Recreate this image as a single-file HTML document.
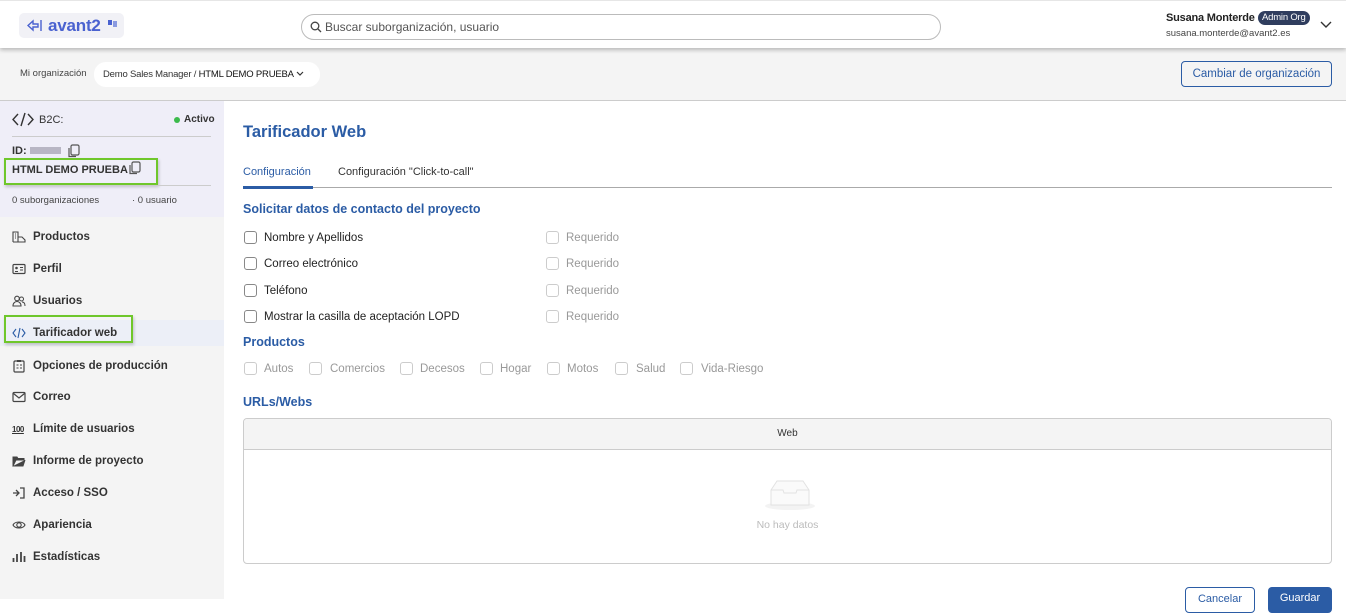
<!DOCTYPE html>
<html><head><meta charset="utf-8"><style>
*{box-sizing:border-box;margin:0;padding:0}
body{width:1346px;height:599px;overflow:hidden;font-family:"Liberation Sans",sans-serif;background:#fff;position:relative;color:#222}
.abs{position:absolute}
.hdr{left:0;top:0;width:1346px;height:48px;background:#fff;border-top:1px solid #e6e6e6;box-shadow:0 2px 4px rgba(0,0,0,.25);z-index:2}
.logo{left:19px;top:12px;width:105px;height:25px;background:#f1f1f6;border-radius:5px}
.logo span{position:absolute;left:29px;top:3px;font-size:17px;font-weight:bold;color:#4a62d0;letter-spacing:-.2px}
.search{left:301px;top:13px;width:640px;height:26px;border:1px solid #bbb;border-radius:13px;font-size:12px;color:#555;padding:5px 0 0 23px}
.org{left:0;top:48px;width:1346px;height:53px;background:#f4f4f4;border-bottom:1px solid #ccc}
.side{left:0;top:101px;width:224px;height:498px;background:#f4f4f4}
.lav{left:0;top:101px;width:224px;height:116px;background:#efeef8}
.menu div{position:absolute;left:12px;font-size:11.5px;font-weight:bold;color:#333;display:flex;align-items:center;gap:7px;white-space:nowrap}
.menu svg{flex:none}
.blue{color:#2b5ca5}
.cb{position:absolute;width:13px;height:13px;border:1px solid #888;border-radius:3px;background:#fff}
.cbd{border-color:#ccc}
.t{position:absolute;font-size:11.5px}
.g{color:#999}
</style></head><body>
<div class="abs hdr">
 <div class="abs logo"><svg class="abs" style="left:8px;top:6px" width="16" height="13"><path d="M1 6.5L6 2v3h5v3H6v3z" fill="none" stroke="#4a62d0" stroke-width="1.4"/><path d="M14 1v11" stroke="#4a62d0" stroke-width="1.4"/></svg><span>avant2</span><div class="abs" style="left:89px;top:7px;width:4px;height:5px;background:#4a62d0"></div><div class="abs" style="left:94px;top:8px;width:4px;height:6px;background:#8a9ae0"></div></div>
 <div class="abs search"><svg class="abs" style="left:8px;top:6px" width="12" height="12"><circle cx="5" cy="5" r="3.8" fill="none" stroke="#444" stroke-width="1.3"/><path d="M8 8l3 3" stroke="#444" stroke-width="1.3"/></svg>Buscar suborganización, usuario</div>
 <div class="abs" style="left:1166px;top:11px;font-size:11px;font-weight:bold;color:#222;letter-spacing:-.2px">Susana Monterde</div>
 <div class="abs" style="left:1258px;top:10px;height:14px;padding:0 4px;background:#2f3d5e;color:#fff;font-size:9.5px;border-radius:7px;line-height:14px;letter-spacing:-.2px">Admin Org</div>
 <div class="abs" style="left:1166px;top:27px;font-size:9.5px;color:#444">susana.monterde@avant2.es</div>
 <svg class="abs" style="left:1320px;top:20px" width="12" height="8"><path d="M1 1l5 5 5-5" fill="none" stroke="#333" stroke-width="1.4"/></svg>
</div>
<div class="abs org">
 <div class="abs" style="left:20px;top:20px;font-size:9.5px;color:#444">Mi organización</div>
 <div class="abs" style="left:94px;top:14px;width:226px;height:25px;background:#fff;border-radius:12px;font-size:9.5px;padding:7px 0 0 9px;color:#333;white-space:nowrap;letter-spacing:-.2px">Demo Sales Manager / <span style="color:#111">HTML DEMO PRUEBA</span> <svg width="8" height="6"><path d="M1 1l3 3 3-3" fill="none" stroke="#333" stroke-width="1.2"/></svg></div>
 <div class="abs" style="left:1181px;top:13px;width:151px;height:26px;border:1px solid #2b5ca5;border-radius:4px;color:#2b5ca5;font-size:11.5px;text-align:center;line-height:24px">Cambiar de organización</div>
</div>
<div class="abs side"></div>
<div class="abs lav">
 <svg class="abs" style="left:12px;top:11px" width="22" height="15"><path d="M6 2L1 7.5 6 13M16 2l5 5.5L16 13M13 1L9 14" fill="none" stroke="#333" stroke-width="1.4"/></svg>
 <div class="abs" style="left:39px;top:13px;font-size:11px;color:#333">B2C:</div>
 <div class="abs" style="left:174px;top:16px;width:6px;height:6px;border-radius:3px;background:#3cba4c"></div>
 <div class="abs" style="left:184px;top:13px;font-size:10px;font-weight:bold;color:#333">Activo</div>
 <div class="abs" style="left:12px;top:35px;width:199px;border-top:1px solid #ccc"></div>
 <div class="abs" style="left:12px;top:44px;font-size:11px;font-weight:bold;color:#333">ID:</div>
 <div class="abs" style="left:30px;top:46px;width:31px;height:7px;background:#b8b6c4"></div>
 <svg class="abs" style="left:67px;top:43px" width="13" height="14"><rect x="4" y="1" width="8" height="10" rx="1.5" fill="none" stroke="#555" stroke-width="1.2"/><path d="M2 4v8.5h7" fill="none" stroke="#555" stroke-width="1.2"/></svg>
 <div class="abs" style="left:4px;top:57px;width:154px;height:27px;border:2px solid #6fc72b;box-shadow:1px 2px 3px rgba(0,0,0,.2)"></div>
 <div class="abs" style="left:12px;top:63px;font-size:11px;font-weight:bold;color:#333">HTML DEMO PRUEBA</div>
 <svg class="abs" style="left:128px;top:60px" width="13" height="14"><rect x="4" y="1" width="8" height="10" rx="1.5" fill="none" stroke="#555" stroke-width="1.2"/><path d="M2 4v8.5h7" fill="none" stroke="#555" stroke-width="1.2"/></svg>
 <div class="abs" style="left:12px;top:72px;width:0"></div>
 <div class="abs" style="left:12px;top:84px;width:199px;border-top:1px solid #ccc"></div>
 <div class="abs" style="left:12px;top:94px;font-size:9.5px;color:#444">0 suborganizaciones</div>
 <div class="abs" style="left:132px;top:94px;font-size:9.5px;color:#444">· 0 usuario</div>
</div>
<div class="abs" style="left:0;top:320px;width:224px;height:26px;background:#eceff7"></div>
<div class="abs" style="left:4px;top:315px;width:129px;height:28px;border:2px solid #6fc72b;box-shadow:1px 2px 3px rgba(0,0,0,.2)"></div>
<div class="menu">
 <div style="top:231px"><svg width="14" height="12"><path d="M1 11V1h5v10M3 3h1M3 5h1M3 7h1M6 6h4l3 3v2H1" fill="none" stroke="#444" stroke-width="1.1"/></svg>Productos</div>
 <div style="top:263px"><svg width="14" height="12"><rect x="1" y="1.5" width="12" height="9" rx="1" fill="none" stroke="#444" stroke-width="1.2"/><circle cx="4.5" cy="5" r="1.3" fill="#444"/><path d="M3 8.5h3M8 4.5h3M8 7h3" stroke="#444"/></svg>Perfil</div>
 <div style="top:295px"><svg width="14" height="12"><circle cx="5" cy="3.5" r="2.3" fill="none" stroke="#444" stroke-width="1.1"/><path d="M1 11c0-3 2-4.5 4-4.5s4 1.5 4 4.5z" fill="none" stroke="#444" stroke-width="1.1"/><circle cx="9.5" cy="4" r="2" fill="none" stroke="#444"/><path d="M10 7c2 0 3 1.5 3 4" fill="none" stroke="#444"/></svg>Usuarios</div>
 <div class="blue" style="top:327px"><svg width="14" height="12"><path d="M4 2L1 6l3 4M10 2l3 4-3 4M8 1L6 11" fill="none" stroke="#2b5ca5" stroke-width="1.1"/></svg>Tarificador web</div>
 <div style="top:359px"><svg width="14" height="14"><rect x="2" y="2" width="10" height="11" rx="1" fill="none" stroke="#444" stroke-width="1.2"/><rect x="5" y="1" width="4" height="2" fill="#444"/><path d="M4.5 6h2M4.5 9h2M8 6h2M8 9h2" stroke="#444"/></svg>Opciones de producción</div>
 <div style="top:391px"><svg width="14" height="12"><rect x="1" y="1.5" width="12" height="9" rx="1" fill="none" stroke="#444" stroke-width="1.2"/><path d="M1.5 2.5L7 7l5.5-4.5" fill="none" stroke="#444" stroke-width="1.2"/></svg>Correo</div>
 <div style="top:423px"><span style="width:14px;font-size:8px;font-weight:bold;text-decoration:underline;letter-spacing:-.5px">100</span>Límite de usuarios</div>
 <div style="top:455px"><svg width="14" height="12"><path d="M1 11V2h4l1 1.5h6V5H4L1 11h10l2-6" fill="#444" stroke="#444" stroke-width="1"/></svg>Informe de proyecto</div>
 <div style="top:487px"><svg width="14" height="12"><path d="M1 6h5M4 3l3 3-3 3M8 1h4v10H8" fill="none" stroke="#444" stroke-width="1.3"/></svg>Acceso / SSO</div>
 <div style="top:519px"><svg width="14" height="12"><path d="M1 6c2-4 10-4 12 0-2 4-10 4-12 0z" fill="none" stroke="#444" stroke-width="1.1"/><circle cx="7" cy="6" r="2.2" fill="none" stroke="#444" stroke-width="1.1"/></svg>Apariencia</div>
 <div style="top:551px"><svg width="14" height="12"><path d="M1.5 11V7M5 11V3M9 11V1M12.5 11V5" stroke="#444" stroke-width="1.8"/></svg>Estadísticas</div>
</div>
<div class="abs blue" style="left:243px;top:123px;font-size:16.5px;font-weight:bold">Tarificador Web</div>
<div class="abs blue" style="left:243px;top:166px;font-size:11px">Configuración</div>
<div class="abs" style="left:338px;top:166px;font-size:11px;color:#333">Configuración "Click-to-call"</div>
<div class="abs" style="left:243px;top:187px;width:1089px;border-top:1px solid #aaa"></div>
<div class="abs" style="left:243px;top:186px;width:70px;height:3px;background:#2b5ca5"></div>
<div class="abs blue" style="left:243px;top:202px;font-size:12.5px;font-weight:bold">Solicitar datos de contacto del proyecto</div>
<div class="cb" style="left:244px;top:231px"></div><div class="t" style="left:264px;top:232px">Nombre y Apellidos</div>
<div class="cb" style="left:244px;top:257px"></div><div class="t" style="left:264px;top:258px">Correo electrónico</div>
<div class="cb" style="left:244px;top:284px"></div><div class="t" style="left:264px;top:285px">Teléfono</div>
<div class="cb" style="left:244px;top:310px"></div><div class="t" style="left:264px;top:311px">Mostrar la casilla de aceptación LOPD</div>
<div class="cb cbd" style="left:546px;top:231px"></div><div class="t g" style="left:566px;top:232px">Requerido</div>
<div class="cb cbd" style="left:546px;top:257px"></div><div class="t g" style="left:566px;top:258px">Requerido</div>
<div class="cb cbd" style="left:546px;top:284px"></div><div class="t g" style="left:566px;top:285px">Requerido</div>
<div class="cb cbd" style="left:546px;top:310px"></div><div class="t g" style="left:566px;top:311px">Requerido</div>
<div class="abs blue" style="left:243px;top:335px;font-size:12.5px;font-weight:bold">Productos</div>
<div class="cb cbd" style="left:244px;top:362px"></div><div class="t g" style="left:264px;top:363px">Autos</div>
<div class="cb cbd" style="left:309px;top:362px"></div><div class="t g" style="left:330px;top:363px">Comercios</div>
<div class="cb cbd" style="left:400px;top:362px"></div><div class="t g" style="left:420px;top:363px">Decesos</div>
<div class="cb cbd" style="left:480px;top:362px"></div><div class="t g" style="left:500px;top:363px">Hogar</div>
<div class="cb cbd" style="left:547px;top:362px"></div><div class="t g" style="left:567px;top:363px">Motos</div>
<div class="cb cbd" style="left:615px;top:362px"></div><div class="t g" style="left:636px;top:363px">Salud</div>
<div class="cb cbd" style="left:680px;top:362px"></div><div class="t g" style="left:701px;top:363px">Vida-Riesgo</div>
<div class="abs blue" style="left:243px;top:395px;font-size:12.5px;font-weight:bold">URLs/Webs</div>
<div class="abs" style="left:243px;top:418px;width:1089px;height:146px;border:1px solid #ccc;border-radius:4px;overflow:hidden">
 <div style="height:31px;background:#f4f4f4;border-bottom:1px solid #ccc;text-align:center;font-size:10px;line-height:29px;color:#333">Web</div>
 <svg class="abs" style="left:520px;top:58px" width="52" height="34"><ellipse cx="26" cy="29" rx="25" ry="4" fill="#f3f3f3"/><path d="M7 13l6-9h26l6 9v15H7z" fill="#fafafa" stroke="#e2e2e2"/><path d="M7 13h12l1 3h12l1-3h12" fill="none" stroke="#e2e2e2"/></svg>
 <div class="abs" style="left:0;width:100%;top:100px;text-align:center;font-size:10.5px;color:#bbb">No hay datos</div>
</div>
<div class="abs" style="left:1185px;top:587px;width:70px;height:26px;border:1px solid #2b5ca5;border-radius:4px;font-size:11px;color:#2b5ca5;text-align:center;line-height:22px">Cancelar</div>
<div class="abs" style="left:1268px;top:587px;width:64px;height:26px;background:#2b5ca5;border-radius:4px;font-size:11px;color:#fff;text-align:center;line-height:22px">Guardar</div>
</body></html>
